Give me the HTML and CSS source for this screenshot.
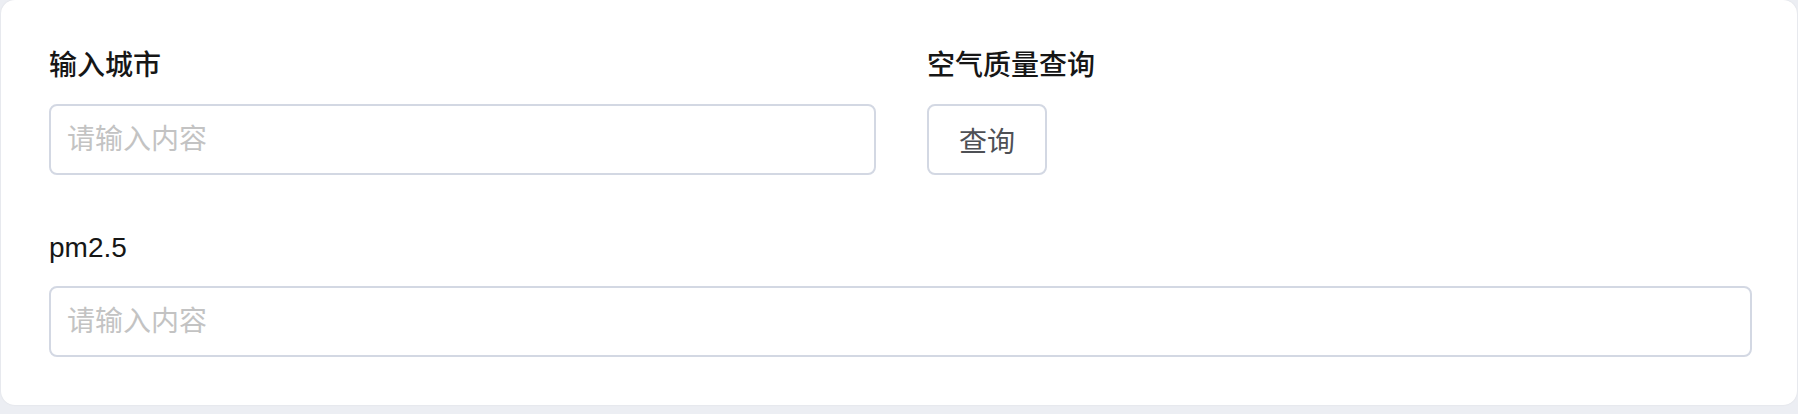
FILE: index.html
```html
<!DOCTYPE html>
<html lang="zh-CN">
<head>
    <meta charset="UTF-8">
    <title>空气质量查询</title>
    <link rel="stylesheet" href="styles.css">
</head>
<body>
<div class="card">
    <form class="form">
        <div class="row">
            <div class="item city">
                <label class="label">输入城市</label>
                <input class="input" type="text" placeholder="请输入内容">
            </div>
            <div class="item">
                <label class="label">空气质量查询</label>
                <button class="btn" type="button">查询</button>
            </div>
        </div>
        <div class="row">
            <div class="item pm">
                <label class="label">pm2.5</label>
                <input class="input" type="text" placeholder="请输入内容">
            </div>
        </div>
    </form>
</div>
</body>
</html>
```

FILE: styles.css
```css
*{
    margin:0;
    padding:0;
    box-sizing: border-box;
}
body{
    background: #eceef3;
    font-family: "Liberation Sans", "Noto Sans CJK SC", sans-serif;
    height: 414px;
    overflow: hidden;
}
.card{
    margin: 0 1px;
    padding: 46px 45px 48px 48px;
    background: #fff;
    border-radius: 14px;
    box-shadow: 0 0 2px rgba(0,0,0,0.08);
}
.form{
    display: flex;
    flex-direction: column;
    gap: 53px;
}
.row{
    display: flex;
    gap: 51px;
}
.item{
    display: flex;
    flex-direction: column;
    gap: 18px;
}
.city{
    width: 827px;
}
.pm{
    width: 1704px;
}
.label{
    display: block;
    height: 40px;
    line-height: 40px;
    font-size: 28px;
    font-weight: 500;
    color: #161616;
}
.input{
    height: 71px;
    width: 100%;
    padding: 0 16px;
    border: 2px solid #d3d8e3;
    border-radius: 8px;
    font-family: inherit;
    font-size: 28px;
    color: #606266;
    outline: none;
}
.input::placeholder{
    color: #c3c3c3;
}
.btn{
    align-self: flex-start;
    height: 71px;
    padding: 0 30px;
    border: 2px solid #d3d8e3;
    border-radius: 8px;
    background: #fff;
    font-family: inherit;
    font-size: 28px;
    color: #4e5055;
    cursor: pointer;
}
```
